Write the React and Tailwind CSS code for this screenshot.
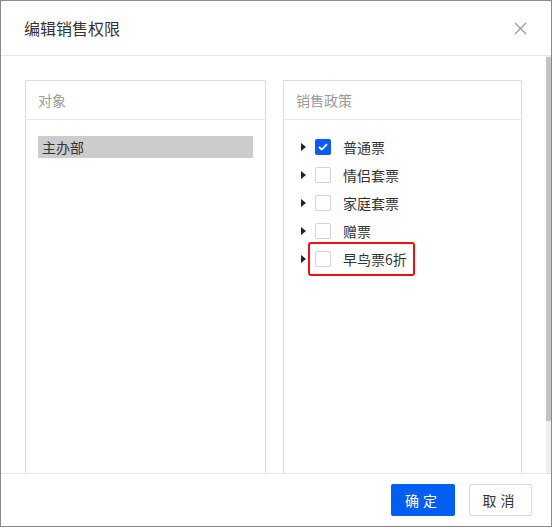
import React from "react";

const FONT = { fontFamily: '"Noto Sans CJK SC", "Noto Sans", sans-serif' };

const policies = [
  { name: "普通票", checked: true },
  { name: "情侣套票", checked: false },
  { name: "家庭套票", checked: false },
  { name: "赠票", checked: false },
  { name: "早鸟票6折", checked: false, flagged: true },
];

function Caret() {
  return (
    <svg width="5" height="8" viewBox="0 0 5 8" className="shrink-0">
      <path d="M0 0 L5 4 L0 8 Z" fill="#222" />
    </svg>
  );
}

function Checkbox({ checked }) {
  if (checked) {
    return (
      <span className="flex h-4 w-4 shrink-0 items-center justify-center rounded-[2px] bg-[#0b5cf2]">
        <svg width="10" height="8" viewBox="0 0 10 8">
          <path d="M1 4 L3.8 6.6 L9 1.2" fill="none" stroke="#fff" strokeWidth="1.8" />
        </svg>
      </span>
    );
  }
  return <span className="h-4 w-4 shrink-0 rounded-[2px] border border-[#d4d4d4] bg-white" />;
}

function Panel({ title, children }) {
  return (
    <div className="flex h-[440px] flex-col border border-[#dcdcdc] bg-white">
      <div className="flex h-[39px] items-center border-b border-[#e8e8e8] px-3 text-[14px] text-[#9a9a9a]">
        {title}
      </div>
      {children}
    </div>
  );
}

export default function App() {
  return (
    <div
      className="flex h-[527px] w-[552px] flex-col border border-[#8a8a8a] bg-white text-[#333]"
      style={FONT}
    >
      {/* header */}
      <div className="flex h-[55px] shrink-0 items-center justify-between border-b border-[#e8e8e8] pl-[23px] pr-[24px]">
        <span className="text-[16px] text-[#333]">编辑销售权限</span>
        <svg width="13" height="13" viewBox="0 0 13 13">
          <path d="M1 1 L12 12 M12 1 L1 12" stroke="#9a9a9a" strokeWidth="1.3" />
        </svg>
      </div>

      {/* body */}
      <div className="flex h-[417px] shrink-0 overflow-hidden">
        <div className="grid flex-1 grid-cols-[241px_239px] gap-[17px] pl-[24px] pt-[24px]">
          <Panel title="对象">
            <div className="px-3 pt-4">
              <div className="flex h-[22px] items-center bg-[#cccccc] px-1 text-[14px] text-[#333]">
                主办部
              </div>
            </div>
          </Panel>
          <Panel title="销售政策">
            <div className="flex flex-col pl-[17px] pt-[13px]">
              {policies.map((p) => (
                <div key={p.name} className="flex h-[28px] items-center">
                  <Caret />
                  <span className="relative ml-[9px] flex items-center gap-3">
                    <Checkbox checked={p.checked} />
                    <span className="text-[14px] text-[#333]">{p.name}</span>
                    {p.flagged && (
                      <span className="pointer-events-none absolute -bottom-[6px] -left-[7px] -right-[8px] -top-[7px] rounded-[3px] border-2 border-[#f01010]" />
                    )}
                  </span>
                </div>
              ))}
            </div>
          </Panel>
        </div>
        {/* scrollbar */}
        <div className="flex w-[5px] shrink-0 flex-col bg-[#efefef]">
          <div className="mt-px h-[364px] bg-[#c4c4c4]" />
        </div>
      </div>

      {/* footer */}
      <div className="flex flex-1 items-center justify-end gap-[14px] border-t border-[#e8e8e8] pr-[19px]">
        <button className="h-8 w-16 rounded-[2px] bg-[#005ef0] text-[14px] tracking-[4px] text-white">
          确定
        </button>
        <button className="h-8 w-[63px] rounded-[2px] border border-[#d9d9d9] bg-white text-[14px] tracking-[4px] text-[#333]">
          取消
        </button>
      </div>
    </div>
  );
}
